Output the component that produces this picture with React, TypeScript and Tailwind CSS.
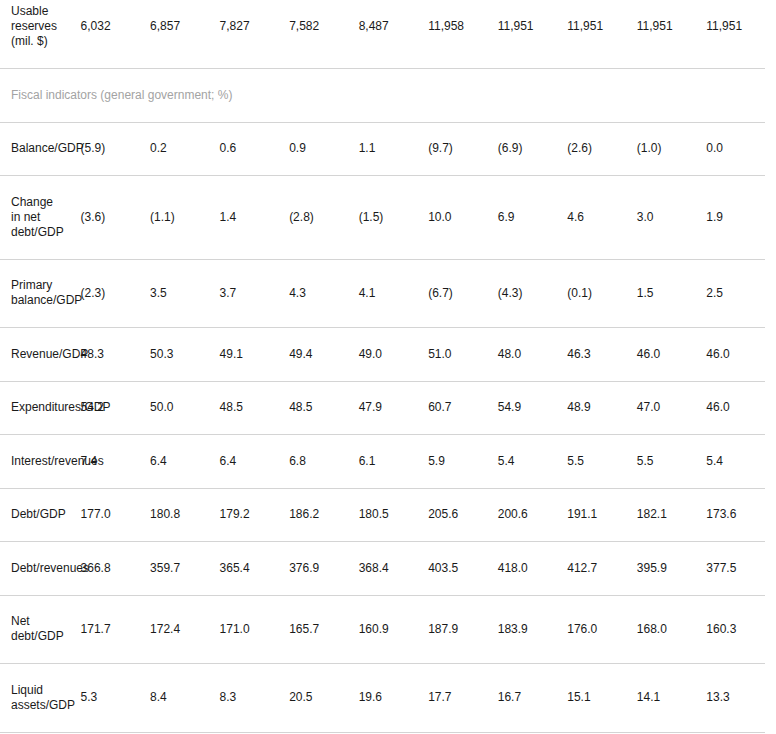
type Row = { label: string; values: string[] };

const reserves: Row = {
  label: "Usable reserves (mil. $)",
  values: ["6,032", "6,857", "7,827", "7,582", "8,487", "11,958", "11,951", "11,951", "11,951", "11,951"],
};

const fiscal: Row[] = [
  { label: "Balance/GDP", values: ["(5.9)", "0.2", "0.6", "0.9", "1.1", "(9.7)", "(6.9)", "(2.6)", "(1.0)", "0.0"] },
  { label: "Change in net debt/GDP", values: ["(3.6)", "(1.1)", "1.4", "(2.8)", "(1.5)", "10.0", "6.9", "4.6", "3.0", "1.9"] },
  { label: "Primary balance/GDP", values: ["(2.3)", "3.5", "3.7", "4.3", "4.1", "(6.7)", "(4.3)", "(0.1)", "1.5", "2.5"] },
  { label: "Revenue/GDP", values: ["48.3", "50.3", "49.1", "49.4", "49.0", "51.0", "48.0", "46.3", "46.0", "46.0"] },
  { label: "Expenditures/GDP", values: ["54.2", "50.0", "48.5", "48.5", "47.9", "60.7", "54.9", "48.9", "47.0", "46.0"] },
  { label: "Interest/revenues", values: ["7.4", "6.4", "6.4", "6.8", "6.1", "5.9", "5.4", "5.5", "5.5", "5.4"] },
  { label: "Debt/GDP", values: ["177.0", "180.8", "179.2", "186.2", "180.5", "205.6", "200.6", "191.1", "182.1", "173.6"] },
  { label: "Debt/revenues", values: ["366.8", "359.7", "365.4", "376.9", "368.4", "403.5", "418.0", "412.7", "395.9", "377.5"] },
  { label: "Net debt/GDP", values: ["171.7", "172.4", "171.0", "165.7", "160.9", "187.9", "183.9", "176.0", "168.0", "160.3"] },
  { label: "Liquid assets/GDP", values: ["5.3", "8.4", "8.3", "20.5", "19.6", "17.7", "16.7", "15.1", "14.1", "13.3"] },
];

const cell =
  "border-b border-[#d4d4d4] pl-[11px] pr-[8px] py-[18.75px] align-middle text-left font-normal";

function DataRow({ row }: { row: Row }) {
  return (
    <tr>
      <td className={cell}>{row.label}</td>
      {row.values.map((v, i) => (
        <td key={i} className={cell}>
          {v}
        </td>
      ))}
    </tr>
  );
}

export default function App() {
  return (
    <div className="min-h-[734px] w-full overflow-hidden bg-white font-['Liberation_Sans',Arial,sans-serif] text-[12px] leading-[15px] text-[#1a1a1a]">
      {/* table is scrolled, first row starts above the viewport */}
      <div className="-mt-[14.5px] w-[765px]">
        <table className="w-full table-fixed border-collapse">
          <tbody>
            <DataRow row={reserves} />
            <tr>
              <td colSpan={11} className={`${cell} text-[#a3a3a3]`}>
                Fiscal indicators (general government; %)
              </td>
            </tr>
            {fiscal.map((r) => (
              <DataRow key={r.label} row={r} />
            ))}
          </tbody>
        </table>
      </div>
    </div>
  );
}
